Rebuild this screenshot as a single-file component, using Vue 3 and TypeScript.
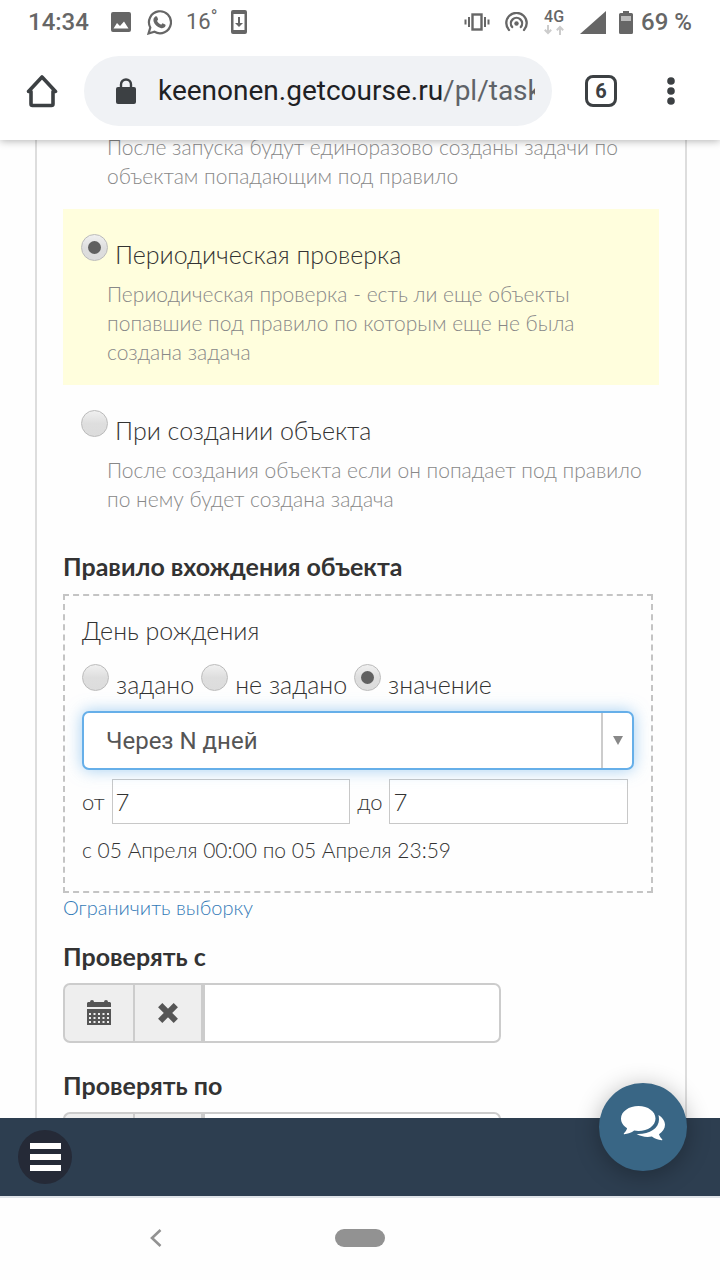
<script setup lang="ts">
import { ref } from 'vue'

const launchMode = ref('periodic')
const birthdayMode = ref('value')
const condition = ref('in-n-days')
const daysFrom = ref('7')
const daysTo = ref('7')
const dates = ref([
  { id: 'check-from', label: 'Проверять с', value: '' },
  { id: 'check-to', label: 'Проверять по', value: '' },
])
const modes = [
  { id: 'periodic', title: 'Периодическая проверка', text: 'Периодическая проверка - есть ли еще объекты попавшие под правило по которым еще не была создана задача' },
  { id: 'create', title: 'При создании объекта', text: 'После создания объекта если он попадает под правило по нему будет создана задача' },
]
const birthdayModes = [
  { id: 'set', title: 'задано' },
  { id: 'unset', title: 'не задано' },
  { id: 'value', title: 'значение' },
]
</script>

<template>
  <div class="screen">
    <header class="chrome">
      <div class="status">
        <span class="clock">14:34</span>
        <svg class="s-image" width="20" height="20" viewBox="0 0 20 20"><path fill="#666" fill-rule="evenodd" d="M2 0h16a2 2 0 0 1 2 2v16a2 2 0 0 1-2 2H2a2 2 0 0 1-2-2V2a2 2 0 0 1 2-2zM2.500 16.500h15L13 9.500l-4 4.500-3-3z" /></svg>
        <svg class="s-chat" width="25" height="25" viewBox="0 0 25 25"><path fill="none" stroke="#666" stroke-width="2.200" d="M1.500 23.500l1.800-6A11 11 0 1 1 7.500 21.800z" /><path fill="#666" d="M8.300 6.500c.6-.5 1.500-.4 1.800.3l.9 2.200c.2.500-.2 1-.9 1.900.9 1.800 2.300 3 4.200 3.800.8-.9 1.200-1.500 1.700-1.300l2.200 1.100c.7.400.4 1.700-.3 2.500-1 1.100-2.800 1.400-4.300.9-3.500-1.100-6-3.500-7-6.500-.500-1.900.1-3.900 1.700-4.900z" /></svg>
        <span class="temp">16<sup>°</sup></span>
        <svg class="s-phone" width="16" height="24" viewBox="0 0 16 24"><path fill="#666" fill-rule="evenodd" d="M2 0h12a2 2 0 0 1 2 2v20a2 2 0 0 1-2 2H2a2 2 0 0 1-2-2V2a2 2 0 0 1 2-2zM2.500 4v16h11V4zM7 7h2v6h3l-4 4-4-4h3z" /></svg>
        <span class="spacer"></span>
        <svg class="s-vibrate" width="26" height="18" viewBox="0 0 26 18"><g fill="none" stroke="#666" stroke-width="2"><rect x="8.500" y="1.500" width="9" height="15" stroke-width="2.400" /><path d="M5 4v10M1.500 6.500v5M21 4v10M24.500 6.500v5" /></g></svg>
        <svg class="s-hotspot" width="23" height="20" viewBox="0 0 23 20"><g fill="none" stroke="#666" stroke-width="2.300" stroke-linecap="round"><path d="M4 18a10.200 10.200 0 1 1 15 0" /><path d="M7.200 15a5.600 5.600 0 1 1 8.600 0" /></g><circle cx="11.500" cy="11.500" r="2.200" fill="#666" /></svg>
        <span class="network">
          <b>4G</b>
          <svg width="20" height="10" viewBox="0 0 20 10"><path fill="none" stroke="#ccc" stroke-width="2" d="M4 0v8M.8 4.800L4 8l3.200-3.200M16 10V2M12.800 5.200L16 2l3.200 3.200" /></svg>
        </span>
        <svg class="s-signal" width="26" height="23" viewBox="0 0 26 23"><path fill="#666" d="M0 23L26 0v23z" /></svg>
        <svg class="s-battery" width="14" height="23" viewBox="0 0 14 23"><path fill="#666" d="M4 0h6v2H4zM1.500 2h11A1.500 1.500 0 0 1 14 3.500v18a1.500 1.500 0 0 1-1.500 1.500h-11A1.500 1.500 0 0 1 0 21.500v-18A1.500 1.500 0 0 1 1.500 2z" /><path fill="#bbb" d="M2 5h10v5H2z" /></svg>
        <span class="percent">69 %</span>
      </div>
      <div class="toolbar">
        <button class="tool home" aria-label="Домой">
          <svg width="32" height="34" viewBox="0 0 32 34"><path fill="none" stroke="#3c4043" stroke-width="3.600" stroke-linejoin="round" d="M2.500 17.500L16 3l13.500 14.500H27V30q0 1.500-1.500 1.500h-19Q5 31.500 5 30V17.500z" /></svg>
        </button>
        <div class="address">
          <svg class="lock" width="20" height="26" viewBox="0 0 20 26"><rect y="9" width="20" height="17" rx="2" fill="#3c4043" /><path d="M5 10V6.500a5 5 0 0 1 10 0V10" fill="none" stroke="#3c4043" stroke-width="2.400" /></svg>
          <span class="url">keenonen.getcourse.ru<i>/pl/tasks</i></span>
        </div>
        <button class="tool tabs" aria-label="Вкладки">6</button>
        <button class="tool more" aria-label="Меню браузера">
          <svg width="8" height="28" viewBox="0 0 8 28"><g fill="#3c4043"><circle cx="4" cy="4" r="3.800" /><circle cx="4" cy="14" r="3.800" /><circle cx="4" cy="24" r="3.800" /></g></svg>
        </button>
      </div>
    </header>

    <main class="viewport">
      <form class="panel" @submit.prevent>
        <p class="hint first">После запуска будут единоразово созданы задачи по объектам попадающим под правило</p>

        <div v-for="mode in modes" :key="mode.id" class="mode" :class="{ active: launchMode === mode.id }">
          <label class="choice">
            <input v-model="launchMode" type="radio" name="launch" :value="mode.id">
            <span>{{ mode.title }}</span>
          </label>
          <p class="hint">{{ mode.text }}</p>
        </div>

        <h2 class="heading rule-heading">Правило вхождения объекта</h2>
        <section class="rule">
          <div class="rule-title">День рождения</div>
          <div class="choices">
            <label v-for="mode in birthdayModes" :key="mode.id" class="choice">
              <input v-model="birthdayMode" type="radio" name="birthday" :value="mode.id">
              <span>{{ mode.title }}</span>
            </label>
          </div>
          <div class="select">
            <select v-model="condition" aria-label="Условие">
              <option value="in-n-days">Через N дней</option>
            </select>
            <span class="arrow"></span>
          </div>
          <div class="range">
            <label for="days-from">от</label>
            <input id="days-from" v-model="daysFrom" type="text">
            <label for="days-to">до</label>
            <input id="days-to" v-model="daysTo" type="text">
          </div>
          <div class="period">с 05 Апреля 00:00 по 05 Апреля 23:59</div>
        </section>
        <a class="limit" href="#">Ограничить выборку</a>

        <div v-for="date in dates" :key="date.id" class="date">
          <label class="heading" :for="date.id">{{ date.label }}</label>
          <div class="group">
            <button type="button" aria-label="Календарь">
              <svg width="24" height="26" viewBox="0 0 24 26">
                <path fill="#555" d="M1 2h2a2 2 0 0 1 4 0h10a2 2 0 0 1 4 0h2l1 1v4H0V3zM0 9h24v16H0z" />
                <path stroke="#eee" stroke-width="2" stroke-dasharray="2 2.500" d="M2 14h20M2 18h20M2 22h20" />
              </svg>
            </button>
            <button type="button" aria-label="Очистить">
              <svg width="20" height="20" viewBox="0 0 20 20"><path stroke="#555" stroke-width="6" d="M2.200 2.200l15.600 15.600M17.800 2.200L2.200 17.800" /></svg>
            </button>
            <input :id="date.id" v-model="date.value" type="text">
          </div>
        </div>
      </form>
    </main>

    <footer class="dock">
      <button class="menu" aria-label="Меню"><i></i><i></i><i></i></button>
      <button class="chat" aria-label="Чат">
        <svg width="44" height="36" viewBox="0 0 44 36">
          <path fill="#fff" d="M17.500 0C27 0 34.500 5.500 34.500 12.500S27 25 17.500 25c-1.500 0-3-.1-4.300-.4C10.500 26.700 7 28 3.300 28.300c-.7 0-.7-.8-.2-1.300 1.500-1.500 2.600-3 3-4.800C2.400 20 0 16.500 0 12.500 0 5.500 8 0 17.500 0z" />
          <path fill="#fff" d="M37.500 9c4 2.500 6.500 6 6.500 9.800 0 3.900-2.400 7.200-6 9.400.5 1.900 1.500 3.300 3 4.800.5.500.5 1.300-.3 1.300-3.700-.4-7-1.700-9.800-3.800-1.300.3-2.800.4-4.300.4-4.200 0-8-1.100-11-2.900C28 28.500 38 22.500 38 13.500c0-1.600-.2-3-.5-4.500z" />
        </svg>
      </button>
    </footer>
    <nav class="system">
      <button aria-label="Назад"><svg width="12" height="18" viewBox="0 0 12 18"><path fill="none" stroke="#929292" stroke-width="2.600" d="M10.500 1L2 9l8.500 8" /></svg></button>
      <button aria-label="Главный экран"><span class="pill"></span></button>
    </nav>
  </div>
</template>

<style>
body {
  margin: 0;
  background: #fefefe;
}
</style>

<style scoped>
* {
  box-sizing: border-box;
}
.screen {
  display: flex;
  flex-direction: column;
  height: 100vh;
  background: #fefefe;
  color: #333;
  font: 300 25px/34px Lato, "Open Sans", sans-serif;
}
button {
  display: flex;
  align-items: center;
  justify-content: center;
  padding: 0;
  border: 0;
  background: none;
}
svg {
  display: block;
  flex: none;
}
.chrome {
  position: relative;
  z-index: 1;
  flex: none;
  background: #fff;
  box-shadow: 0 1px 8px rgba(0, 0, 0, 0.3);
  font-family: Roboto, sans-serif;
}
.status {
  display: flex;
  align-items: center;
  height: 44px;
  padding: 0 28px;
  color: #666;
  font-size: 24px;
  font-weight: 500;
}
.s-image {
  margin-left: 22px;
}
.s-chat {
  margin-left: 16px;
}
.temp {
  display: flex;
  margin-left: 14px;
  font-size: 22px;
  font-weight: 400;
}
.temp sup {
  font-size: 18px;
  line-height: 24px;
}
.s-phone {
  margin-left: 14px;
}
.spacer {
  flex: 1;
}
.s-hotspot {
  margin-left: 15px;
}
.network {
  display: flex;
  flex-direction: column;
  align-items: center;
  gap: 1px;
  margin: 0 16px 0 16px;
}
.network b {
  font-size: 16px;
  font-weight: 500;
  line-height: 14px;
}
.s-battery {
  margin: 0 8px 0 13px;
}
.toolbar {
  display: flex;
  align-items: center;
  height: 96px;
  padding: 0 45px 2px 26px;
}
.home {
  flex: none;
}
.address {
  display: flex;
  flex: 1;
  align-items: center;
  min-width: 0;
  height: 70px;
  margin-left: 26px;
  padding: 0 17px 0 32px;
  border-radius: 35px;
  background: #f0f2f5;
}
.url {
  flex: 1;
  margin-left: 22px;
  overflow: hidden;
  color: #202124;
  font-size: 28px;
  font-weight: 400;
  line-height: 40px;
  white-space: nowrap;
}
.url i {
  color: #5f6368;
  font-style: normal;
}
.tabs {
  flex: none;
  width: 32px;
  height: 32px;
  margin: 0 50px 0 33px;
  border: 3px solid #3c4043;
  border-radius: 8px;
  color: #3c4043;
  font: 700 20px/26px Roboto, sans-serif;
}
.viewport {
  flex: 1;
  min-height: 0;
  overflow: hidden;
}
.panel {
  margin: -8px 33px 0 35px;
  padding: 0 26px 40px;
  border: solid #ddd;
  border-width: 0 2px;
}
.hint {
  margin: 0;
  padding-left: 26px;
  color: #888;
  font-size: 21px;
  line-height: 29px;
}
.hint.first {
  padding: 0 18px 19px 44px;
}
.mode {
  padding: 25px 14px 19px 18px;
}
.mode.active {
  background: #fffedd;
}
.mode .choice {
  margin-bottom: 8px;
}
.choice {
  display: flex;
  align-items: flex-start;
  gap: 7px;
}
.choice span {
  padding-top: 3px;
}
.choice input {
  display: flex;
  flex: none;
  align-items: center;
  justify-content: center;
  appearance: none;
  width: 27px;
  height: 27px;
  margin: 0;
  border: 1px solid #bbb;
  border-radius: 50%;
  background: linear-gradient(#f0f0f0, #dedede 50%, #dcdcdc);
}
.choice input:checked::after {
  content: "";
  width: 13px;
  height: 13px;
  border-radius: 50%;
  background: #606060;
}
.heading {
  display: block;
  margin: 0;
  font-size: 25px;
  font-weight: 700;
  line-height: 34px;
}
.rule-heading {
  padding: 17px 0 11px;
}
.rule {
  margin-right: 6px;
  padding: 17px 17px 24px;
  border: 2px dashed #c4c4c4;
}
.choices {
  display: flex;
  gap: 7px;
  padding: 17px 0 10px;
}
.select {
  position: relative;
}
.select select {
  display: block;
  appearance: none;
  width: 100%;
  height: 59px;
  padding: 0 50px 0 22px;
  border: 2px solid #66afe9;
  border-radius: 7px;
  outline: none;
  background: #fff;
  box-shadow: 0 0 16px rgba(102, 175, 233, 0.6);
  color: #555;
  font: 400 24px/34px Roboto, sans-serif;
}
.arrow {
  position: absolute;
  inset: 2px 2px 2px auto;
  display: flex;
  align-items: center;
  justify-content: center;
  width: 31px;
  border-left: 2px solid #ccc;
  pointer-events: none;
}
.arrow::before {
  content: "";
  border: solid transparent;
  border-width: 9px 5px 0;
  border-top-color: #888;
}
.range {
  display: flex;
  align-items: center;
  gap: 7px;
  margin: 9px 6px 9px 0;
}
.range label {
  font-size: 22px;
}
.range input {
  flex: 1;
  min-width: 0;
  height: 45px;
  padding: 0 3px;
  border: 1px solid #c8c8c8;
  border-radius: 0;
  background: #fff;
  color: #333;
  font: 300 24px/34px Lato, "Open Sans", sans-serif;
}
.period {
  font-size: 21px;
}
.limit {
  display: block;
  color: #337ab7;
  font-size: 20px;
  line-height: 28px;
  text-decoration: none;
}
.date {
  padding-top: 18px;
}
.group {
  display: flex;
  max-width: 438px;
  height: 60px;
  margin: 10px 0 7px;
}
.group button {
  width: 70px;
  border: 2px solid #ccc;
  background: #eee;
}
.group button:first-child {
  border-right: 0;
  border-radius: 7px 0 0 7px;
}
.group input {
  flex: 1;
  min-width: 0;
  border: 2px solid #ccc;
  border-radius: 0 7px 7px 0;
  background: #fff;
  font: inherit;
}
.dock {
  position: relative;
  z-index: 1;
  display: flex;
  flex: none;
  align-items: center;
  height: 80px;
  padding-left: 18px;
  border-bottom: 2px solid #dfe3e8;
  background: #2d3e50;
}
.menu {
  flex-direction: column;
  gap: 5px;
  width: 54px;
  height: 54px;
  border-radius: 50%;
  background: #252a37;
}
.menu i {
  width: 31px;
  height: 6px;
  background: #fff;
}
.chat {
  position: absolute;
  top: -35px;
  right: 33px;
  width: 88px;
  height: 88px;
  padding-bottom: 6px;
  border-radius: 50%;
  background: #396685;
  box-shadow: 0 4px 24px rgba(0, 0, 0, 0.3);
}
.system {
  display: grid;
  flex: none;
  grid-template-columns: repeat(3, 1fr);
  height: 82px;
  padding: 0 54px 2px;
}
.pill {
  width: 50px;
  height: 18px;
  border-radius: 9px;
  background: #929292;
}
</style>
